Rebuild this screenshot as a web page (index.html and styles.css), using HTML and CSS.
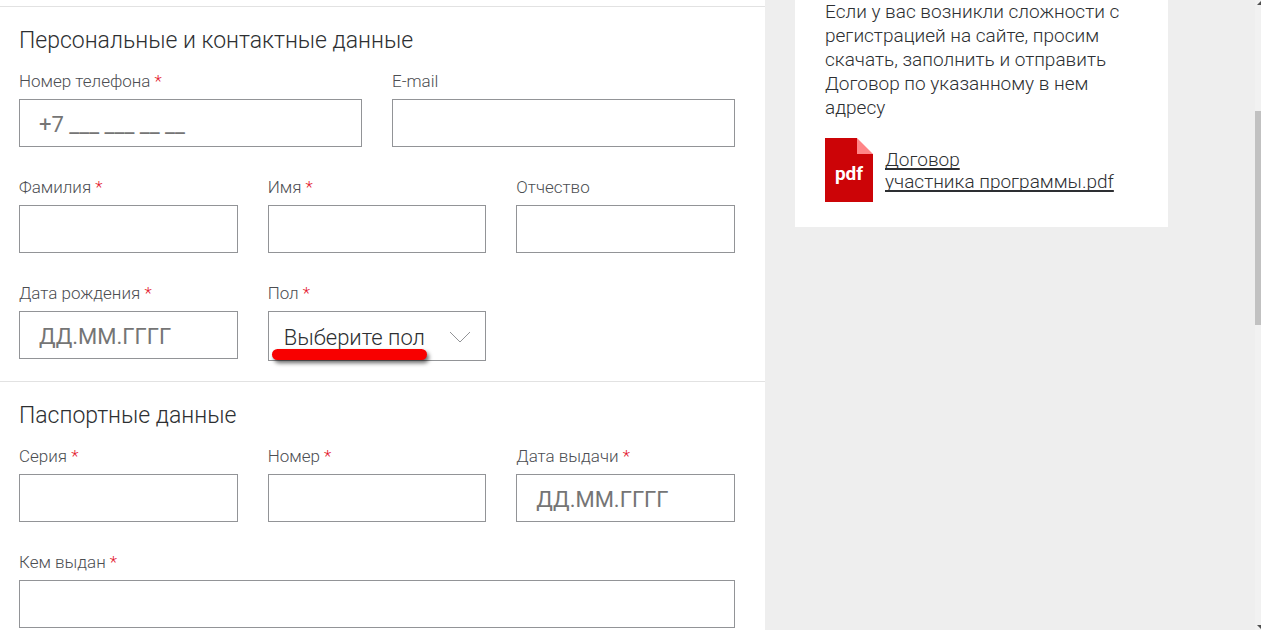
FILE: index.html
```html
<!DOCTYPE html>
<html lang="ru">
<head>
<meta charset="utf-8">
<meta name="viewport" content="width=device-width, initial-scale=1">
<title>Регистрация</title>
<link rel="stylesheet" href="styles.css">
</head>
<body>
<div class="page">
  <form class="form">
    <section class="section">
      <h2 class="section-title">Персональные и контактные данные</h2>
      <div class="row row-2">
        <div class="field">
          <label class="label" for="phone">Номер телефона <span class="required">*</span></label>
          <input class="input" id="phone" type="tel" placeholder="+7 ___ ___ __ __">
        </div>
        <div class="field">
          <label class="label" for="email">E-mail</label>
          <input class="input" id="email" type="email">
        </div>
      </div>
      <div class="row row-3">
        <div class="field">
          <label class="label" for="surname">Фамилия <span class="required">*</span></label>
          <input class="input" id="surname" type="text">
        </div>
        <div class="field">
          <label class="label" for="name">Имя <span class="required">*</span></label>
          <input class="input" id="name" type="text">
        </div>
        <div class="field">
          <label class="label" for="patronymic">Отчество</label>
          <input class="input" id="patronymic" type="text">
        </div>
      </div>
      <div class="row row-3">
        <div class="field">
          <label class="label" for="birthday">Дата рождения <span class="required">*</span></label>
          <input class="input" id="birthday" type="text" placeholder="ДД.ММ.ГГГГ">
        </div>
        <div class="field">
          <label class="label" for="gender">Пол <span class="required">*</span></label>
          <div class="select-wrap">
            <select class="select" id="gender">
              <option>Выберите пол</option>
            </select>
            <svg class="chevron" viewBox="0 0 22 12" aria-hidden="true"><path d="M1 1 L11 11 L21 1"/></svg>
            <span class="marker"></span>
          </div>
        </div>
      </div>
    </section>
    <section class="section">
      <h2 class="section-title">Паспортные данные</h2>
      <div class="row row-3">
        <div class="field">
          <label class="label" for="series">Серия <span class="required">*</span></label>
          <input class="input" id="series" type="text">
        </div>
        <div class="field">
          <label class="label" for="number">Номер <span class="required">*</span></label>
          <input class="input" id="number" type="text">
        </div>
        <div class="field">
          <label class="label" for="issued">Дата выдачи <span class="required">*</span></label>
          <input class="input" id="issued" type="text" placeholder="ДД.ММ.ГГГГ">
        </div>
      </div>
      <div class="row">
        <div class="field">
          <label class="label" for="issuer">Кем выдан <span class="required">*</span></label>
          <input class="input" id="issuer" type="text">
        </div>
      </div>
    </section>
  </form>
  <aside class="side">
    <div class="card">
      <p class="card-text">Если у вас возникли сложности с регистрацией на сайте, просим скачать, заполнить и отправить Договор по указанному в нем адресу</p>
      <div class="file">
        <svg class="file-icon" viewBox="0 0 48 64" role="img" aria-label="pdf">
          <path fill="#cc0407" d="M0 0H32V16H48V64H0Z"/>
          <path fill="#ff8587" d="M32 0L48 16H32Z"/>
          <text class="file-type" x="24" y="42" text-anchor="middle">pdf</text>
        </svg>
        <a class="file-link" href="#">Договор<br>участника программы.pdf</a>
      </div>
    </div>
  </aside>
  <div class="scrollbar" aria-hidden="true">
    <svg class="scroll-arrow" viewBox="0 0 6 6"><path d="M2 5L6 1V5Z"/></svg>
    <span class="scroll-thumb"></span>
    <svg class="scroll-arrow" viewBox="0 0 6 6"><path d="M2 1L6 5V1Z"/></svg>
  </div>
</div>
</body>
</html>
```
FILE: styles.css
```css
* {
  box-sizing: border-box;
}

body {
  margin: 0;
  background: #eee;
  color: #2d2f32;
  font-family: Roboto, "Noto Sans", sans-serif;
  font-weight: 300;
}

.page {
  display: grid;
  grid-template-columns: minmax(0, 765fr) minmax(0, 490fr) 6px;
  grid-template-rows: 100%;
  height: 100vh;
  overflow: hidden;
}

.form {
  padding-top: 6px;
  background: #fff;
}

.section {
  display: grid;
  gap: 30px;
  padding: 18px 30px 20px 19px;
  border-top: 1px solid #e2e2e2;
}

.section-title {
  margin: 0 0 -16px;
  font-size: 23px;
  line-height: 32px;
  font-weight: 300;
}

.row {
  display: grid;
  gap: 30px;
  align-items: start;
}

.row-2 {
  grid-template-columns: repeat(2, minmax(0, 1fr));
}

.row-3 {
  grid-template-columns: repeat(3, minmax(0, 1fr));
}

.label {
  display: block;
  margin-bottom: 8px;
  color: #4c4e52;
  font-size: 17px;
  line-height: 20px;
}

.required {
  color: #e3142a;
}

.input,
.select {
  display: block;
  width: 100%;
  height: 48px;
  border: 1px solid #929497;
  border-radius: 0;
  background: #fff;
  color: #2d2f32;
  font: inherit;
  font-size: 22px;
}

.input {
  padding: 2px 19px 0;
}

.input::placeholder {
  color: #757575;
  font-weight: 400;
  opacity: 1;
}

.select-wrap {
  position: relative;
}

.select {
  height: 50px;
  padding: 2px 40px 0 15px;
  appearance: none;
}

.chevron {
  position: absolute;
  top: 20px;
  right: 15px;
  width: 22px;
  height: 12px;
  fill: none;
  stroke: #929497;
}

.marker {
  position: absolute;
  left: 4px;
  bottom: 1px;
  width: 155px;
  height: 11px;
  border-radius: 6px;
  background: #f80000;
  box-shadow: 2px 3px 4px rgba(0, 0, 0, 0.6);
}

.side {
  padding: 0 87px 0 30px;
}

.card {
  padding: 0 30px 25px;
  background: #fff;
}

.card-text {
  margin: 0 0 18px;
  font-size: 19px;
  line-height: 24px;
}

.file {
  display: flex;
  align-items: center;
  gap: 12px;
}

.file-icon {
  flex: none;
  width: 48px;
  height: 64px;
}

.file-type {
  fill: #fff;
  font-size: 19px;
  font-weight: 700;
}

.file-link {
  padding-top: 2px;
  color: inherit;
  font-size: 19px;
  line-height: 22px;
  text-decoration-thickness: 2px;
  text-underline-offset: 2px;
  text-decoration-skip-ink: none;
  white-space: nowrap;
}

.scrollbar {
  display: flex;
  flex-direction: column;
  background: #f1f1f1;
}

.scroll-arrow {
  flex: none;
  width: 6px;
  height: 6px;
  fill: #505050;
}

.scroll-thumb {
  height: 34%;
  margin: 105px 0 auto;
  background: #c1c1c1;
}
```
